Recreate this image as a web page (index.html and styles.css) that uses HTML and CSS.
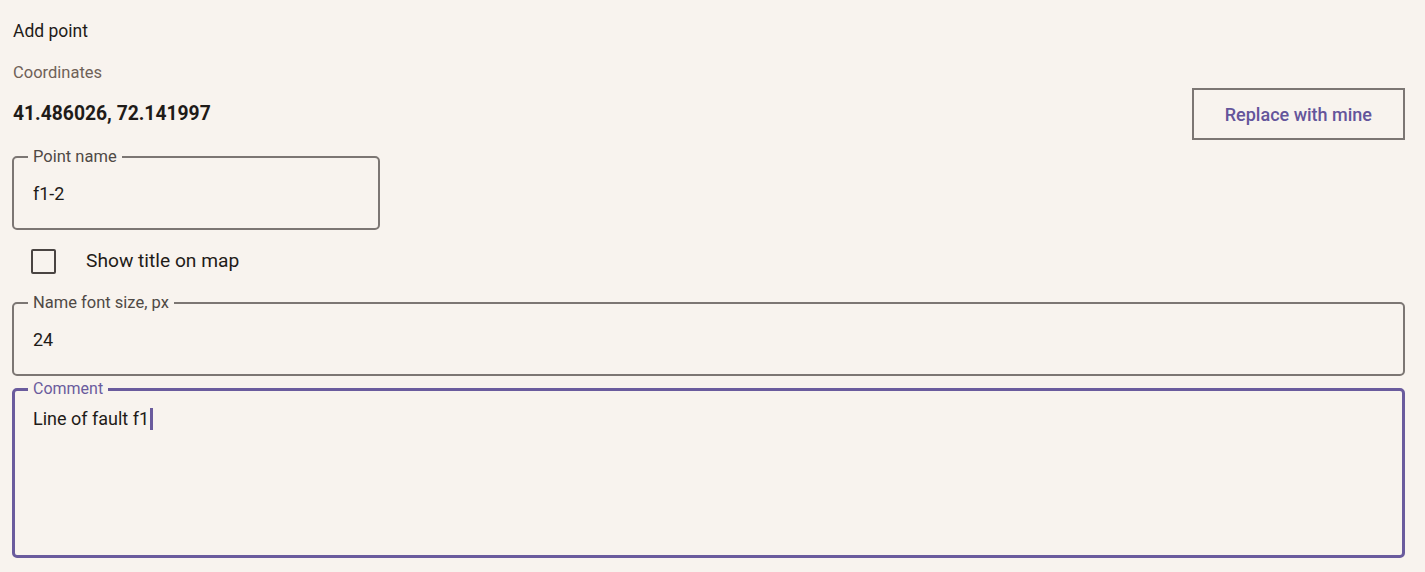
FILE: index.html
```html
<!DOCTYPE html>
<html lang="en">
<head>
    <meta charset="UTF-8">
    <meta name="viewport" content="width=device-width, initial-scale=1.0">
    <title>Add point</title>
    <link rel="stylesheet" href="styles.css">
</head>
<body>

    <div class="page">
        <h1 class="title">Add point</h1>

        <div class="coords-label">Coordinates</div>
        <div class="coords-row">
            <span class="coords-value">41.486026, 72.141997</span>
            <button class="outline-button" type="button">Replace with mine</button>
        </div>

        <!-- Point name -->
        <fieldset class="field field-short">
            <legend>Point name</legend>
            <input type="text" class="field-input" value="f1-2">
        </fieldset>

        <label class="check-row">
            <span class="check-box"></span>
            <span class="check-label">Show title on map</span>
        </label>

        <!-- Font size for the name on the map -->
        <fieldset class="field field-after-check">
            <legend>Name font size, px</legend>
            <input type="text" class="field-input" value="24">
        </fieldset>

        <!-- Comment (focused) -->
        <fieldset class="field field-focused">
            <legend>Comment</legend>
            <div class="field-area">Line of fault f1<span class="caret"></span></div>
        </fieldset>
    </div>

</body>
</html>
```

FILE: styles.css
```css
html, body {
    margin: 0;
    background-color: #f8f3ee;
    font-family: Roboto, "Noto Sans", Arial, sans-serif;
    color: #1f1b18;
}

.page {
    padding: 19px 20px 0 12px;
    display: flex;
    flex-direction: column;
}

.title {
    margin: 0;
    font-size: 17.5px;
    font-weight: 400;
    line-height: 24px;
    padding-left: 1px;
}

.coords-label {
    margin-top: 19px;
    font-size: 16.5px;
    line-height: 22px;
    color: #6f6157;
    padding-left: 1px;
}

.coords-row {
    margin-top: 4px;
    display: flex;
    justify-content: space-between;
    align-items: center;
}

.coords-value {
    font-size: 19.3px;
    font-weight: 700;
    line-height: 26px;
    padding-left: 1px;
}

.outline-button {
    height: 52px;
    padding: 0 31px;
    background: transparent;
    border: 2px solid #7c7673;
    border-radius: 0;
    font-family: inherit;
    font-size: 18px;
    font-weight: 500;
    color: #64559b;
    cursor: pointer;
}

/* Outlined text fields */
.field {
    margin: 8px 0 0;
    padding: 0;
    min-width: 0;
    border: 2px solid #7c7673;
    border-radius: 5px;
}

.field-short {
    width: 368px;
    box-sizing: border-box;
}

.field-after-check {
    margin-top: 0;
}

.field legend {
    margin-left: 14px;
    padding: 0 5px;
    font-size: 16.5px;
    line-height: 18px;
    color: #4f4945;
}

.field-input {
    display: block;
    width: 100%;
    box-sizing: border-box;
    height: 62px;
    padding: 15px 19px 23px;
    margin: 0;
    border: none;
    outline: none;
    background: transparent;
    font-family: inherit;
    font-size: 18px;
    line-height: 24px;
    color: #1f1b18;
}

.check-row {
    margin: 7px 0 9px 19px;
    height: 48px;
    display: flex;
    align-items: center;
    gap: 30px;
}

.check-box {
    width: 25px;
    height: 25px;
    box-sizing: border-box;
    border: 2px solid #4a4442;
    border-radius: 2px;
}

.check-label {
    font-size: 19.2px;
    line-height: 24px;
}

.field-focused {
    margin-top: 4px;
    border: 3px solid #6a5b9d;
}

.field-focused legend {
    margin-left: 13px;
    font-size: 16px;
    color: #6a5b9d;
}

.field-area {
    height: 157px;
    box-sizing: border-box;
    padding: 9px 18px 0;
    font-size: 18px;
    line-height: 24px;
}

.caret {
    display: inline-block;
    width: 3px;
    height: 22px;
    margin-left: 1px;
    background-color: #6a5b9d;
    vertical-align: -5px;
}
```
